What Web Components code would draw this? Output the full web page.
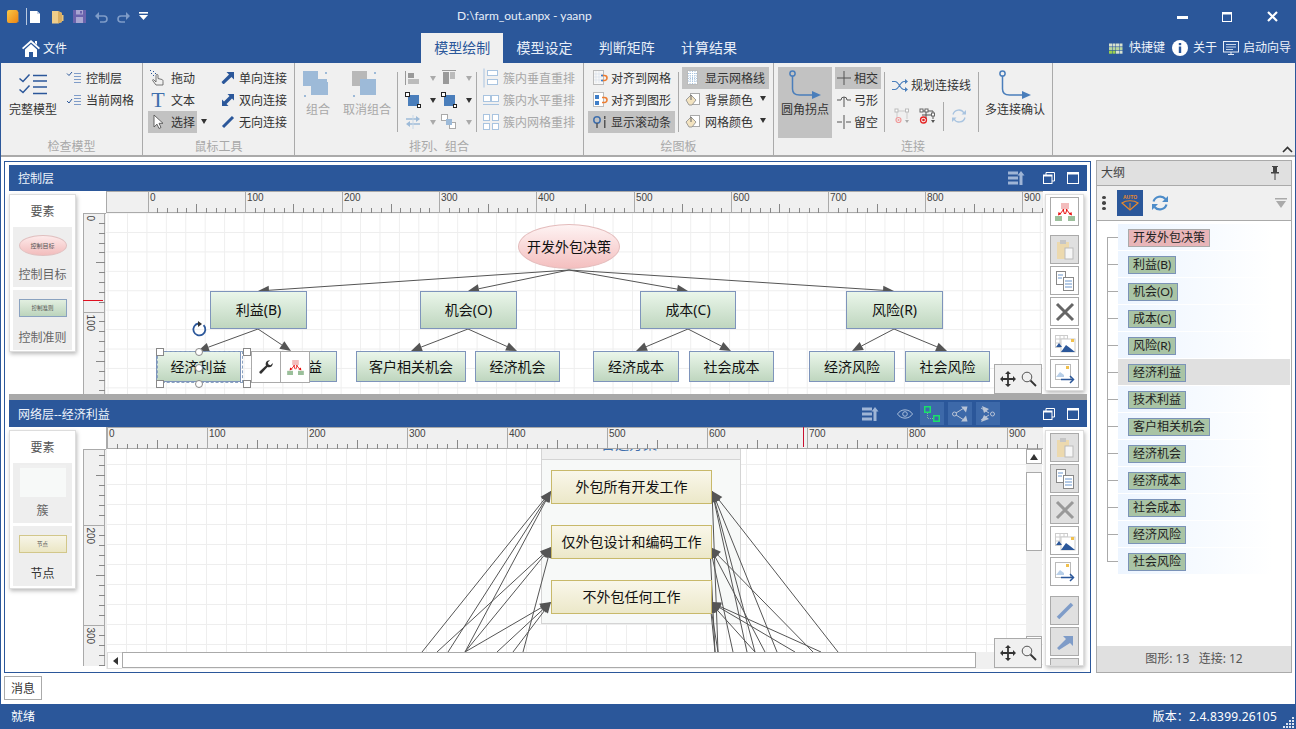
<!DOCTYPE html>
<html lang="zh"><head><meta charset="utf-8"><title>yaanp</title>
<style>
html,body{margin:0;padding:0;background:#fff}
body{width:1296px;height:729px;overflow:hidden;font:12px/18px "Noto Sans","Noto Sans CJK SC",sans-serif;color:#333}
</style></head><body>
<x-app>
 <x-titlebar title-text="D:\farm_out.anpx - yaanp"></x-titlebar>
 <x-tabbar></x-tabbar>
 <x-ribbon>
  <x-group label="检查模型" w="142" pad="8">
    <rb-large icon="chklg" w="50">完整模型</rb-large>
    <rb-col ml="8" w="70"><rb-small icon="chk1">控制层</rb-small><rb-small icon="chk2">当前网格</rb-small></rb-col>
  </x-group>
  <x-group label="鼠标工具" w="152" pad="5">
    <rb-col w="49"><rb-small icon="hand" gap="5" pl="2">拖动</rb-small><rb-small icon="tt" gap="5" pl="2">文本</rb-small><rb-small icon="cursor" gap="5" pl="2" sel>选择</rb-small></rb-col>
    <rb-col w="23"><rb-caret></rb-caret></rb-col>
    <rb-col w="74"><rb-small icon="a1" gap="3">单向连接</rb-small><rb-small icon="a2" gap="3">双向连接</rb-small><rb-small icon="a3" gap="3">无向连接</rb-small></rb-col>
  </x-group>
  <x-group label="排列、组合" w="289" pad="8">
    <rb-large icon="grp" w="30" off>组合</rb-large>
    <rb-large icon="ungrp" w="48" ml="10" off>取消组合</rb-large>
    <rb-sep ml="6" mr="7"></rb-sep>
    <rb-icons></rb-icons>
    <rb-sep ml="0" mr="6"></rb-sep>
    <rb-col w="95"><rb-small icon="cv" off>簇内垂直重排</rb-small><rb-small icon="ch" off>簇内水平重排</rb-small><rb-small icon="cg" off>簇内网格重排</rb-small></rb-col>
  </x-group>
  <x-group label="绘图板" w="190" pad="4">
    <rb-col w="87"><rb-small icon="m1" pl="4" gap="3">对齐到网格</rb-small><rb-small icon="m2" pl="4" gap="3">对齐到图形</rb-small><rb-small icon="sb" pl="4" gap="3" sel>显示滚动条</rb-small></rb-col>
    <rb-sep ml="3" mr="3"></rb-sep>
    <rb-col w="87"><rb-small icon="gridp" pl="3" sel>显示网格线</rb-small><rb-small icon="paint" pl="3" caret>背景颜色</rb-small><rb-small icon="paint" pl="3" caret>网格颜色</rb-small></rb-col>
  </x-group>
  <x-group label="连接" w="279" pad="4">
    <rb-large icon="corner" w="54" h="71" sel>圆角拐点</rb-large>
    <rb-col ml="3" w="46"><rb-small icon="cross" gap="2" pl="1" sel>相交</rb-small><rb-small icon="arc" gap="2" pl="1">弓形</rb-small><rb-small icon="gapx" gap="2" pl="1">留空</rb-small></rb-col>
    <rb-sep ml="3" mr="5"></rb-sep>
    <rb-route></rb-route>
    <rb-sep ml="3" mr="6"></rb-sep>
    <rb-large icon="corner" w="60">多连接确认</rb-large>
  </x-group>
  <rb-collapse></rb-collapse>
 </x-ribbon>
 <x-main>
  <x-doc>
   <x-pane kind="top" label="控制层"></x-pane>
   <x-split></x-split>
   <x-pane kind="bottom" label="网络层--经济利益"></x-pane>
  </x-doc>
  <x-outline></x-outline>
 </x-main>
 <x-msgbar>消息</x-msgbar>
 <x-status></x-status>
</x-app>
<script>
const BL='#4a7ebb',DK='#2b579a';
const L=(d,c,w)=>`<path d="${d}" fill="none" stroke="${c}" stroke-width="${w||1}"/>`;
const F=(d,c)=>`<path d="${d}" fill="${c}"/>`;
const R=(x,y,w,h,f,s)=>`<rect x="${x}" y="${y}" width="${w}" height="${h}" fill="${f||'none'}"${s?` stroke="${s}"`:''}/>`;
const ICONS={
 app:[14,15,`<defs><linearGradient id="ag" x1="0" y1="0" x2="1" y2="1"><stop offset="0" stop-color="#f8c848"/><stop offset="1" stop-color="#ee8412"/></linearGradient></defs><rect x="1" y="1" width="11" height="13" rx="2" fill="url(#ag)"/><path d="M12 3h1v10h-1z" fill="#777"/>`],
 doc:[12,14,F('M1 1h7l3 3v9H1z','#fff')+F('M8 1v3h3z','#c8d4e8')],
 folder:[13,14,F('M1 1h6l4 2v9l-4 1.5H1z','#efcd8a')+F('M7 1l4 2v9l-4 1.5z','#d9ae62')+F('M11 5h1.5v6H11z','#e9c67e')],
 save:[13,13,R(0,0,13,13,'#6a63ad')+R(3,0,7,4.5,'#a9a6d2')+R(3,7,7,6,'#a9a6d2')+R(7,1,2,2.5,'#6a63ad')],
 undo:[13,12,L('M3 5h6a3 3 0 0 1 0 6H5','#7f9cc8',1.6)+F('M0 5l4-4v8z','#7f9cc8')],
 redo:[13,12,L('M10 5H4a3 3 0 0 0 0 6h4','#7f9cc8',1.6)+F('M13 5L9 1v8z','#7f9cc8')],
 qdrop:[10,9,F('M0 0h9v1.6H0z','#fff')+F('M0 3h9L4.5 8z','#fff')],
 home:[18,17,F('M9 0l9 8-1.2 1.2L9 2.4 1.2 9.2 0 8z','#fff')+F('M3 9.5L9 4l6 5.5V17h-4v-5H7v5H3z','#fff')+F('M13 1h2v4l-2-2z','#fff')],
 keys:[14,11,[0,1,2,3].map(i=>[0,1,2].map(j=>R(i*3.5,j*3.6+.5,3,3,j==2&&i<2?'#9bd04e':(j==1?'#b9d6a0':'#d7e1cf'))).join('')).join('')],
 info:[16,16,`<circle cx="8" cy="8" r="8" fill="#fff"/>`+R(6.8,3,2.4,2.2,DK)+R(6.8,6.5,2.4,6.5,DK)],
 monitor:[16,15,R(.5,.5,15,10.5,'none','#e8eef7')+L('M3 3.5h10M3 6h10M3 8.500h7','#c8d6ea')+L('M5 13.500h6M8 11v2','#e8eef7')],
 chklg:[28,22,L('M.5 4.500l3.500 3 6.500-7M.5 15.500l3.500 3 6.500-7',DK,1.5)+L('M14 1.500h14M14 7h14M14 13h14M14 19.500h14',DK,1.5)],
 chk1:[16,16,L('M1 3.500l2 2 3-3.500',DK,1)+L('M8 3.500h7M8 6.500h7M8 9.500h7M8 12.500h7','#7f9cc8',1)],
 chk2:[16,16,L('M1 9l2 2 3-4',DK,1)+L('M8 3.500h7M8 6.500h7M8 9.500h7M8 12.500h7','#7f9cc8',1)],
 hand:[16,16,L('M6 15l-3-4c-1-1 0-2 1-1l2 2V5.500c0-1.500 2-1.500 2 0v3l4 1c1 .5 1 1 1 2v3.500z','#555',.8)+F('M1 3h1v1H1zM3 1h1v1H3zM3 5h1v1H3zM5 3h1v1H5zM0 0h1v1H0z','#2b579a')],
 tt:[16,18,`<text x="8" y="16" text-anchor="middle" font-family="Liberation Serif" font-size="22" fill="#3f6fad">T</text>`],
 cursor:[16,16,F('M4 1v12l3-2.800 2 4.300 2-1-2-4.200h4z','#fff')+L('M4 1v12l3-2.800 2 4.300 2-1-2-4.200h4z','#555',.9)],
 a1:[16,16,F('M3 14L1.500 12 9 4.500 6.500 2H14v7.500L11.500 7 4 14z',DK)],
 a2:[16,16,F('M2 7.500V14h6.500L6.500 12 12 6.500 14 8.500V2H7.500L9.500 4 4 9.500z',DK)],
 a3:[16,16,L('M3 13L13 3',DK,3)],
 grp:[30,28,R(0,0,15,15,'#9dbad8')+R(11,11,14,13,'#9dbad8')+R(8,8,16,16,'#9dbad8')+R(22,1,2,2,'#9dbad8')+R(1,24,2,2,'#9dbad8')],
 ungrp:[30,28,R(0,0,15,15,'#b8b8b8')+R(8,8,16,16,'#9dbad8')+R(22,1,2,2,'#9dbad8')+R(1,24,2,2,'#9dbad8')],
 al1:[16,16,L('M.5 1v14','#999')+R(3,3,6,5,'#999')+R(3,9,11,5,'#bbb')],
 al2:[16,16,L('M1 .5h14','#999')+R(2,2,6,12,'#999')+R(9,2,5,7,'#bbb')],
 z1:[16,16,R(3,3,11,11,'#4a7ebb')+R(.5,.5,4,4,'#fff','#222')+R(12.500,12.500,3,3,'#fff','#222')],
 sw:[16,16,L('M1 5h12M3 10h12','#9dbad8',1.500)+F('M11 2l4 3-4 3zM5 7l-4 3 4 3z','#9dbad8')+L('M8 1v14','#c8d8e8')],
 ord:[16,16,R(.5,.5,6,6,'#fff','#aaa')+R(8.500,8.500,6,6,'#fff','#aaa')+R(5,5,6,6,'#9dbad8')],
 cv:[16,20,R(.5,.5,1,19,'#a9c4e0')+R(4.500,2.500,10,5,'#fff','#a9c4e0')+R(4.500,11.500,10,5,'#fff','#a9c4e0')],
 ch:[16,16,R(.5,3.500,7,6,'#fff','#a9c4e0')+R(8.500,3.500,7,6,'#fff','#a9c4e0')+R(0,12,16,1,'#a9c4e0')],
 cg:[16,16,R(.5,.5,6,6,'#fff','#a9c4e0')+R(9.500,.5,6,6,'#fff','#a9c4e0')+R(.5,9.500,6,6,'#fff','#a9c4e0')+R(9.500,9.500,6,6,'#fff','#a9c4e0')],
 m1:[16,16,R(1.500,.5,10,14,'#f8f8f8','#bbb')+`<path d="M4 1.500v12M7 1.500v12M2.500 4h8M2.500 7h8M2.500 10h8" stroke="#cdd8e6" stroke-dasharray="1 1"/>`+L('M10 5.500h2.500a2.500 2.500 0 0 1 0 5H10','#ee7d31',1.600)+R(9,4.700,2,1.600,'#3f7ec8')+R(9,9.700,2,1.600,'#3f7ec8')],
 m2:[16,16,R(1.500,.5,10,14,'#fff','#bbb')+R(3,3,4,4,'#3f7ec8')+R(3,9,4,4,'#3f7ec8')+L('M10 5.500h2.500a2.500 2.500 0 0 1 0 5H10','#ee7d31',1.600)],
 sb:[16,16,`<circle cx="5" cy="6" r="3.200" fill="none" stroke="#3f6fad" stroke-width="1.500"/>`+L('M5 9v5','#555',1.500)+R(12,2,1.500,3,'#555')+R(12,6,1.500,8,'#555')],
 gridp:[16,16,R(2.500,.5,10,14,'#fff','#bbb')+`<path d="M5 1v13M7.500 1v13M10 1v13M3 3.500h9M3 6h9M3 8.500h9M3 11h9" stroke="#a9c4e0" stroke-dasharray="1 1"/>`],
 paint:[16,16,R(5.500,1.500,9,11,'#fff','#aaa')+F('M1 8l5-5 5 5-4 5H4z','#f3e3c0')+L('M1 8l5-5 5 5-4 5H4z','#888',.8)+L('M6 3v5','#666')],
 corner:[32,30,`<circle cx="3.500" cy="3.500" r="2.600" fill="none" stroke="#4a7ebb" stroke-width="1.500"/>`+L('M3.500 6v13c0 4 3 6 7 6h13',BL,1.500)+F('M23 21l9 4-9 4z',BL)],
 cross:[16,16,L('M1 8h14M8 1v14','#555')],
 arc:[16,16,L('M1 8h4a3 3 0 0 1 6 0h4M8 5v10','#555')],
 gapx:[16,16,L('M1 8h5M10 8h5M8 1v14','#555')],
 shuffle:[16,13,L('M0 2.500h3c4 0 5 8 9 8h2M0 10.500h3c4 0 5-8 9-8h2',BL,1.200)+F('M13 0l3 2.500-3 2.500zM13 8l3 2.500-3 2.500z',BL)],
 rt1:[16,16,L('M2 3h10v8M2 3v7','#ccc')+R(0,1,3,3,'#fff','#bbb')+R(10.500,1,3,3,'#fff','#bbb')+`<circle cx="3.500" cy="12" r="2.500" fill="none" stroke="#f09a9a" stroke-width="1.200"/><circle cx="3.500" cy="12" r="1" fill="#f09a9a"/>`+F('M10 12h4l-2 3z','#aaa')],
 rt2:[16,16,L('M2 3h11v8M6 3v8M2 7h11','#555')+R(0,1,3,3,'#fff','#666')+R(5,1,3,3,'#fff','#666')+R(11.500,5,3,3,'#fff','#666')+`<circle cx="3.500" cy="12" r="3" fill="none" stroke="#e52323" stroke-width="1.300"/><circle cx="3.500" cy="12" r="1.300" fill="#e52323"/>`+F('M11 12h4l-2 3z','#555')],
 refr:[16,16,L('M2 6.500a6 6 0 0 1 11-1.500M14 9.500a6 6 0 0 1-11 1.500','#a9c4e0',1.300)+F('M15 2v4.500h-4.500zM1 14v-4.500h4.500z','#a9c4e0')],
 sort:[16,14,L('M0 2h10M0 7h10M0 12h10','#9fb5d6',3)+F('M13 0l3.500 4.500h-2V14h-3V4.500h-2z','#9fb5d6')],
 restore:[12,12,L('M3 3V.5h8.500v8.500H9','#fff')+R(.5,3,8.500,8.500,'none','#fff')+R(.5,3,8.500,1.500,'#fff')],
 maxi:[12,12,R(.5,.5,11,11,'none','#fff')+R(0,0,12,2.500,'#fff')],
 eye:[16,10,L('M.5 5C4 -.5 12 -.5 15.500 5 12 10.500 4 10.500 .5 5z','#a9bedb')+`<circle cx="8" cy="5" r="2.300" fill="none" stroke="#a9bedb"/>`],
 layer:[16,16,`<g fill="none" stroke="#19e06a" stroke-width="1.500"><rect x=".75" y=".75" width="5.500" height="5.500"/><rect x="9.750" y="9.750" width="5.500" height="5.500"/></g>`+`<path d="M3.500 7v5.500h5.500" fill="none" stroke="#7fb0a0" stroke-dasharray="1 1"/>`],
 share:[16,16,`<circle cx="2.500" cy="8" r="2" fill="none" stroke="#b9c4d6"/>`+L('M4 7l8-5M4 9l8 5','#b9c4d6')+F('M9 .5h6.500l-1.500 6zM9 15.500h6.500l-1.500-6z','#b9c4d6')],
 merge:[16,16,L('M1 2l8 5M1 14l8-5','#b9c4d6')+`<circle cx="12.500" cy="8" r="2" fill="none" stroke="#b9c4d6"/>`+F('M2 0l7 3-5 4zM1 16l8-3-5-4z','#b9c4d6')],
 tree:[20,18,R(6,0,8,6,'#f3bcbc')+R(0,13,7,5,'#9bbf9b')+R(13,13,7,5,'#9bbf9b')+L('M9 6L5 11M11 6l4 5M8 6l1.500 5M12 6l-1.500 5','#e80d0d',1)+F('M3 12.500l.5-3.500 3 2zM17 12.500l-.5-3.500-3 2z','#e80d0d')],
 wrench:[16,16,F('M1.500 12.500L8 6.500C7 4 8.500 1 12 1.200L9.800 3.500 10.500 5.500 12.500 6.200 14.800 4C15 7.500 12 9 9.500 8L3.500 14.500C2.500 15.300.7 13.500 1.500 12.500z','#333')],
 paste:[20,20,R(2,2,12,17,'#ecd9ae')+R(5,0,6,4,'#c6c6c6')+R(10,8,8,11,'#f6f6f6','#bbb')],
 copy:[20,20,R(1.500,.5,9,13,'#fff','#888')+R(8.500,6.500,10,13,'#fff','#888')+L('M3 4h5M3 7h4M10 10h7M10 13h7M10 16h7','#6a96cc')],
 del:[20,20,L('M2 2l16 16M18 2L2 18','#999',3)],
 delon:[20,20,L('M2 2l16 16M18 2L2 18','#666',3)],
 pics:[20,20,R(.5,2.500,12,12,'#fff','#ccc')+L('M1 6h11M1 10h11M5 3v11M9 3v11','#ccc')+R(6,6,14,13,'#fff','#ccc')+F('M6 19l5-7 4 3 5 4z',DK)+F('M1 14l3-4 3 4z',DK)+R(16,6,3,3,'#f1c04c')],
 exp:[20,20,R(.5,.5,15,15,'#fff','#bbb')+F('M1 13l4-5 4 3v2z','#b8cfe8')+R(11,2,3,3,'#f1c04c')+L('M6 15.500h12',DK,1.500)+L('M15 12l3.500 3.500L15 19',DK,1.500)],
 pen:[20,20,L('M3 17L17 3','#7f9cc8',3.500)],
 arr:[20,20,F('M4 18l-2-2L11 7 8 4h10v10l-3-3z','#7f9cc8')],
 move:[16,16,L('M8 1v14M1 8h14','#333',1.800)+F('M8 0l3 3H5zM8 16l-3-3h6zM0 8l3-3v6zM16 8l-3 3V5z','#333')],
 mag:[16,16,`<circle cx="6" cy="6" r="4.800" fill="none" stroke="#555"/>`+L('M9.500 9.500l5.500 5.500','#333',1.800)],
 rot:[16,16,L('M12.600 4.200A6 6 0 1 1 7.500 2.500',DK,1.800)+F('M7 0l4 3-4 3z','#333')],
 pin:[10,14,F('M2 0h6v1H7v5h2v1.500H5.500V14h-1V7.500H1V6h2V1H2z','#444')],
 wiper:[20,18,`<text x="10" y="5" text-anchor="middle" font-family="Liberation Sans" font-weight="bold" font-size="5" fill="#e8892c">AUTO</text>`+L('M2 9c4-3 12-3 16 0l-8 7z','#e8892c',1.200)+L('M10 16V9','#e8892c',1)],
 refb:[18,18,L('M2.500 7.500a7 7 0 0 1 12-2.500M15.500 10.500a7 7 0 0 1-12 2.500','#4d8cc9',2.200)+F('M17 2v6h-6zM1 16v-6h6z','#4d8cc9')],
 tri:[12,10,R(0,0,12,1.500,'#aaa')+F('M1 3h10l-5 7z','#aaa')],
 grip:[12,12,[[9,1],[6,4],[9,4],[3,7],[6,7],[9,7],[0,10],[3,10],[6,10],[9,10]].map(p=>R(p[0],p[1],2,2,'#dbe4f2')).join('')]
};
function def(name,css,html){
 const C=class extends HTMLElement{connectedCallback(){if(this.shadowRoot)return;const s=this.attachShadow({mode:'open'});s.innerHTML=`<style>${typeof css==='function'?css(this):css}</style>`+(typeof html==='function'?html(this):html)}};
 customElements.define(name,C);
}
const ic=(n,w,h)=>`<x-icon name="${n}"${w?` w="${w}"`:''}${h?` h="${h}"`:''}></x-icon>`;
def('x-icon',e=>{const d=ICONS[e.getAttribute('name')];const w=e.getAttribute('w')||d[0],h=e.getAttribute('h')||d[1];return `:host{display:block;flex:none;width:${w}px;height:${h}px}svg{display:block;overflow:visible}`},
 e=>{const d=ICONS[e.getAttribute('name')];const w=e.getAttribute('w')||d[0],h=e.getAttribute('h')||d[1];return `<svg width="${w}" height="${h}" viewBox="0 0 ${d[0]} ${d[1]}">${d[2]}</svg>`});
def('x-app',':host{display:flex;flex-direction:column;width:1296px;height:729px;box-sizing:border-box;border:solid #2b579a;border-width:0 1px;background:#fff}','<slot></slot>');
def('x-titlebar',`:host{display:flex;align-items:center;height:33px;background:#2b579a;color:#fff;flex:none;margin:0 -1px}
 .q{display:flex;align-items:center;width:457px;flex:none;height:100%;padding-left:6px;box-sizing:border-box}
 .q x-icon{margin-right:9px}.s{width:1px;height:17px;background:#b9c9e0;margin:0 2px 0 -3px}
 .t{flex:1;font-family:Lato,"Noto Sans",sans-serif;font-size:12px;line-height:18px;margin-top:-1px;color:#e8eef8}
 .w{display:flex;height:100%;align-items:center;padding:2px 1.500px 0 0;box-sizing:border-box}.w svg{display:block}.b{width:45px;display:flex;justify-content:center}`,
 e=>`<div class="q">${ic('app')}<span class="s"></span>${ic('doc')}<span style="width:1px"></span>${ic('folder')}${ic('save')}${ic('undo')}${ic('redo')}${ic('qdrop')}</div>
 <div class="t">${e.getAttribute('title-text')}</div>
 <div class="w"><div class="b"><svg width="11" height="11"><rect x="0" y="4" width="11" height="3" fill="#fff"/></svg></div><div class="b"><svg width="11" height="11"><rect x=".5" y=".5" width="9" height="9" fill="none" stroke="#fff"/><rect x="0" y="0" width="10" height="2.500" fill="#fff"/></svg></div><div class="b"><svg width="11" height="11" style="margin-top:-2px"><path d="M1 1l9 9M10 1l-9 9" stroke="#fff" stroke-width="2.200"/></svg></div></div>`);
def('x-tabbar',`:host{display:flex;height:30px;flex:none;background:#2b579a;color:#fff;margin:0 -1px;align-items:stretch}
 .home{width:421px;display:flex;align-items:center;padding-left:22px;box-sizing:border-box;gap:3px}
 .home span{padding-top:1px}
 .tab{width:82.300px;text-align:center;font-size:14px;line-height:29px;color:#e8eef8}
 .on{background:#f0f0f0;color:#2b579a}
 .r{margin-left:auto;display:flex;align-items:center;padding-right:5px;font-size:12px;color:#eef3fa}.r x-icon{margin-right:4px}.r span{margin-right:7px}`,
 `<div class="home">${ic('home')}<span style="color:#f4f7fb">文件</span></div><div class="tab on">模型绘制</div><div class="tab">模型设定</div><div class="tab">判断矩阵</div><div class="tab">计算结果</div>
 <div class="r">${ic('keys')}<span style="margin-left:2px">快捷键</span>${ic('info')}<span style="margin:0 6px 0 1px">关于</span>${ic('monitor')}<span style="margin:0">启动向导</span></div>`);
def('x-ribbon',`:host{display:flex;height:94px;flex:none;box-sizing:border-box;background:#f0f0f0;border-bottom:2px solid #aaa;position:relative}`,'<slot></slot>');
def('x-group',e=>`:host{display:flex;flex-direction:column;width:${e.getAttribute('w')}px;flex:none;box-sizing:border-box;border-right:1px solid #aaa}
 .c{height:71px;flex:none;padding:4px 0 0 ${(+e.getAttribute('pad')||0)-(e.getAttribute('label')==='检查模型'?1:0)}px;display:flex;align-items:flex-start;box-sizing:content-box}
 .l{text-align:center;color:#a8a8a8;line-height:18px;flex:none}`,
 e=>`<div class="c"><slot></slot></div><div class="l">${e.getAttribute('label')}</div>`);
def('rb-large',e=>`:host{display:flex;flex-direction:column;align-items:center;flex:none;width:${e.getAttribute('w')}px;height:${e.getAttribute('h')||60}px;margin-left:${e.getAttribute('ml')||0}px;box-sizing:border-box;color:${e.hasAttribute('off')?'#a8a8a8':'#333'};background:${e.hasAttribute('sel')?'#c2c2c2':'none'}}
 .i{height:30px;margin-top:3px;display:flex;align-items:center;justify-content:center;flex:none}.t{line-height:18px;white-space:nowrap;margin-top:1px}`,
 e=>`<div class="i">${ic(e.getAttribute('icon'))}</div><div class="t"><slot></slot></div>`);
def('rb-col',e=>`:host{display:flex;flex-direction:column;flex:none;width:${e.getAttribute('w')}px;margin-left:${e.getAttribute('ml')||0}px}`,'<slot></slot>');
def('rb-small',e=>`:host{display:flex;align-items:center;height:22px;flex:none;white-space:nowrap;padding-left:${e.getAttribute('pl')||0}px;gap:${e.getAttribute('gap')||4}px;color:${e.hasAttribute('off')?'#a8a8a8':'#333'};background:${e.hasAttribute('sel')?'#c2c2c2':'none'}}
 span{padding-top:2px}
 .k{margin-left:3px;border:solid transparent;border-width:5px 3.500px 0;border-top-color:#333;margin-top:-3px}`,
 e=>`${ic(e.getAttribute('icon'))}<span><slot></slot></span>${e.hasAttribute('caret')?'<i class="k"></i>':''}`);
def('rb-caret',`:host{display:flex;height:22px;margin-top:44px;align-items:center;padding-left:4px}i{border:solid transparent;border-width:5px 3.500px 0;border-top-color:#333;margin-top:-2px}`,'<i></i>');
def('rb-sep',e=>`:host{display:block;flex:none;width:1px;height:60px;margin:5px ${e.getAttribute('mr')||0}px 0 ${e.getAttribute('ml')||0}px;background:#aaa}`,'');
def('rb-icons',`:host{display:grid;grid-template-columns:36px 35px;grid-auto-rows:22px;flex:none;width:71px}
 div{display:flex;align-items:center;gap:9px}i{border:solid transparent;border-width:5px 3.500px 0;border-top-color:#aaa}i.d{border-top-color:#333}`,
 [['al1',0],['al2',0],['z1',1],['z1',1],['sw',0],['ord',0]].map(([n,d])=>`<div>${ic(n)}<i class="${d?'d':''}"></i></div>`).join(''));
def('rb-route',`:host{display:flex;flex-direction:column;width:85px;flex:none}
 .a{display:flex;align-items:center;height:36px;gap:3px;padding-left:2px;white-space:nowrap}.a span{padding-top:1px}.b{display:flex;align-items:center;height:26px;padding-left:5px}
 .s{width:1px;height:29px;background:#aaa;margin:0 7px;flex:none}`,
 `<div class="a">${ic('shuffle')}<span>规划连接线</span></div><div class="b">${ic('rt1')}<span style="width:9px"></span>${ic('rt2')}<span class="s"></span>${ic('refr')}</div>`);
def('rb-collapse',`:host{display:block;position:absolute;right:2px;bottom:2px;line-height:0}`,`<svg width="11" height="7"><path d="M1 6l4.500-4.500L10 6" fill="none" stroke="#333" stroke-width="1.600"/></svg>`);
def('x-main',`:host{display:flex;flex:none;height:516px;padding:3px 2px 0 3px;box-sizing:border-box;gap:5px}`,'<slot></slot>');
def('x-doc',`:host{display:flex;flex-direction:column;width:1087px;height:512px;margin-top:1px;box-sizing:border-box;border:1px solid #2b579a;padding:3px 3px 0 4px;flex:none}`,'<slot></slot>');
def('x-split',`:host{display:block;height:6px;background:#a9a9a9;flex:none}`,'');
const hb=(n)=>`<div class="hl">${ic(n)}</div>`;
def('x-pane',e=>{const top=e.getAttribute('kind')==='top';return `:host{display:flex;flex-direction:column;flex:none;height:${top?229:269}px}
 .h{height:${top?26:27}px;flex:none;background:#2b579a;display:flex;align-items:center;padding-left:9px;font-size:12px;color:#eef3fa}
 .h .tt{flex:1;padding-top:2px}.h x-icon{margin-right:12px}
 .hl{width:24px;height:23px;background:#3d69a9;display:flex;align-items:center;justify-content:center;margin-right:4px}.hl x-icon{margin:0}
 .b{flex:1;display:grid;grid-template-columns:74px 23px 937px 44px;grid-template-rows:22px 1fr;background:#fff;min-height:0}
 .p{grid-row:1/3;padding-top:3px}.cr{grid-column:2;grid-row:1}.tb{grid-column:4;grid-row:1/3;padding:3px 0 0 2px}`},
 e=>{const top=e.getAttribute('kind')==='top';return `<div class="h"><span class="tt">${e.getAttribute('label')}</span>
 ${top?`<x-icon name="sort" style="margin-right:19px"></x-icon>`:`<x-icon name="sort" style="margin-right:19px"></x-icon><x-icon name="eye" style="margin-right:7px"></x-icon>${hb('layer')}${hb('share')}${hb('merge')}<span style="width:39px"></span>`}
 ${ic('restore')}<x-icon name="maxi" style="margin-right:8px"></x-icon></div>
 <div class="b"><div class="p"><x-palette kind="${e.getAttribute('kind')}"></x-palette></div><div class="cr"></div>
 <x-ruler dir="h" o="${top?41.600:.7}" sc="${top?.972:1}" len="937" style="grid-column:3;grid-row:1"></x-ruler>
 <x-ruler dir="v" o="${top?0:-124}" sc="${top?.985:1}" len="${top?181:217}" style="grid-column:2;grid-row:2"></x-ruler>
 <x-canvas kind="${e.getAttribute('kind')}" style="grid-column:3;grid-row:2"></x-canvas>
 <div class="tb"><x-toolbar kind="${e.getAttribute('kind')}"></x-toolbar></div></div>`});
def('x-ruler',e=>e.getAttribute('dir')==='h'?`:host{display:block;height:22px;line-height:0;overflow:hidden}`:`:host{display:block;width:23px;line-height:0;overflow:hidden;height:${e.getAttribute('len')}px}`,
 e=>{const o=+e.getAttribute('o'),sc=+e.getAttribute('sc'),len=+e.getAttribute('len');let s='';
 const tc='#888';
 if(e.getAttribute('dir')==='h'){
  s+=`<rect width="${len}" height="22" fill="#f0f0f0"/><path d="M0 .5H${len}M0 21.500H${len}M.5 0V22" stroke="#aaa"/>`;
  for(let u=0;u<=1000;u+=10){const x=Math.round(o+u*sc)+.5;if(x>len)break;
   if(u%100===0){s+=`<path d="M${x} 0V22" stroke="#aaa"/><text x="${x+1.500}" y="10" font-family="Liberation Sans" font-size="10" fill="#444">${u}</text>`}
   else s+=`<path d="M${x} ${u%50===0?13:17}V22" stroke="${tc}"/>`}
  if(o<1)s+=`<path d="M697.500 0V20" stroke="#c81030"/>`;
  return `<svg width="${len}" height="22">${s}</svg>`;
 }
 s+=`<rect width="23" height="${len}" fill="#f0f0f0"/><path d="M.5 0V${len}M21.500 0V${len}M0 .5H23" stroke="#aaa"/>`;
 for(let u=0;u<=600;u+=10){const y=Math.round(o+u*sc)+.5;if(y<0)continue;if(y>len)break;
  if(u%100===0){s+=`<path d="M0 ${y}H22" stroke="#aaa"/><text transform="translate(4 ${y+2}) rotate(90)" font-family="Liberation Sans" font-size="10" fill="#444">${u}</text>`}
  else s+=`<path d="M${u%50===0?13:16} ${y}H22" stroke="${tc}"/>`}
 if(e.getAttribute('o')==='0')s+=`<path d="M0 87.500H20" stroke="#e01020"/>`;
 return `<svg width="23" height="${len}">${s}</svg>`});
def('x-palette',e=>`:host{display:block;width:67px;height:${e.getAttribute('kind')==='top'?158:159}px;box-sizing:border-box;background:#fff;border:1px solid #ddd;box-shadow:1px 2px 4px #bbb;padding:0 3px}
 .t{text-align:center;font-size:12px;line-height:18px;padding:8px 0 6px;color:#555}
 .i{height:60px;background:#eee;margin-bottom:3px;display:flex;flex-direction:column;align-items:center}
 .pv{height:36px;display:flex;align-items:center;justify-content:center}.l{line-height:18px;color:#666;margin-top:3px}
 .m{width:48px;height:21px;font-size:6px;line-height:21px;text-align:center;box-sizing:border-box;color:#555;white-space:nowrap;overflow:hidden}
 .e{border-radius:50%;background:linear-gradient(#fdeaea,#f2bcbc);border:1px solid #e0c0c0}
 .n{height:18px;line-height:17px;background:linear-gradient(#e2efe0,#bcd4bc);border:1px solid #8aa2c0;font-size:5.500px}
 .g{width:46px;height:29px;background:#f7f9f8;border-top:3px solid #f0f0f0}
 .y{height:18px;line-height:17px;background:linear-gradient(#f7f5e8,#ebe6c4);border:1px solid #d2c78a;font-size:5.500px}`,
 e=>e.getAttribute('kind')==='top'?`<div class="t">要素</div><div class="i"><div class="pv"><div class="m e">控制目标</div></div><div class="l">控制目标</div></div><div class="i"><div class="pv"><div class="m n">控制准则</div></div><div class="l">控制准则</div></div>`
 :`<div class="t">要素</div><div class="i"><div class="pv"><div class="g"></div></div><div class="l">簇</div></div><div class="i"><div class="pv"><div class="m y">节点</div></div><div class="l" style="color:#333">节点</div></div>`);
def('x-node',e=>{const k=e.getAttribute('k');const bg={e:'linear-gradient(#fef3f3,#f4bfbf)',g:'linear-gradient(#eaf6ea,#bfd6bf)',y:'linear-gradient(#f9f7ea,#ece8c9)'}[k];const bd={e:'#e4bcbc',g:'#7e94bb',y:'#c8b96a'}[k];
 return `:host{display:flex;align-items:center;justify-content:center;position:absolute;left:${e.getAttribute('x')}px;top:${e.getAttribute('y')}px;width:${e.getAttribute('w')}px;height:${e.getAttribute('h')}px;box-sizing:border-box;background:${bg};border:1px solid ${bd};${k==='e'?'border-radius:50%;':''}font-size:14px;line-height:20px;color:#111;white-space:nowrap}`},'<slot></slot>');
function arrow(x1,y1,x2,y2){const a=Math.atan2(y2-y1,x2-x1),l=11,w=4.500;const bx=x2-l*Math.cos(a),by=y2-l*Math.sin(a),nx=-Math.sin(a)*w,ny=Math.cos(a)*w;
 return `<path d="M${x1} ${y1}L${bx} ${by}" stroke="#555" fill="none"/><path d="M${x2} ${y2}L${bx+nx} ${by+ny}L${bx-nx} ${by-ny}z" fill="#555"/>`}
const n=(x,y,w,h,k,t)=>`<x-node x="${x}" y="${y}" w="${w}" h="${h}" k="${k}">${t}</x-node>`;
def('x-canvas',e=>{const top=e.getAttribute('kind')==='top';const s=top?19.43:20;
 return `:host{display:block;position:relative;overflow:hidden;background-color:#fff;background-image:linear-gradient(#eee 1px,transparent 1px),linear-gradient(90deg,#eee 1px,transparent 1px);background-size:${s}px ${s}px;background-position:${top?'21px 19px':'20px 15px'}}
 svg{position:absolute;left:0;top:0}
 .vs svg,.hs svg{position:static}
 .cl{position:absolute;left:435px;top:-19px;width:200px;height:194px;box-sizing:border-box;border:1px solid #d4d4d4;background:#f7f9f8}
 .clh{height:29px;box-sizing:border-box;background:#f0f0f0;border-bottom:1px solid #d4d4d4;color:#3f6fad;line-height:20px;overflow:hidden;font-size:14px;padding:3px 0 0 59px}
 .sel{position:absolute;left:51px;top:138px;width:86px;height:32px;box-sizing:border-box;border:1px dashed #8aa2c0}
 .hd{position:absolute;width:6px;height:6px;background:#fff;border:1px solid #888}
 .c{border-radius:50%}
 .rot{position:absolute;left:85px;top:108px}
 .mini{position:absolute;left:145px;top:138px;width:59px;height:32px;box-sizing:border-box;display:flex;background:#fff;border:1px solid #aaa}
 .mini div{flex:1;display:flex;align-items:center;justify-content:center}.mini div+div{border-left:1px solid #aaa}
 .pad{position:absolute;right:1px;bottom:0;width:48px;height:30px;box-sizing:border-box;background:#f0f0f0;border:1px solid #aaa;display:flex;align-items:center;justify-content:center;gap:5px}
 .vs{position:absolute;left:920px;top:0;width:16px;height:203px;background:#f0f0f0}
 .vs .u{height:15px;box-sizing:border-box;background:#fff;border:1px solid #aaa;display:flex;align-items:center;justify-content:center}
 .vs .th{margin-top:8px;height:79px;background:#fff;box-sizing:border-box;border:1px solid #aaa}
 .vs .d{margin-top:85px;height:20px;box-sizing:border-box;background:#fff;border:1px solid #aaa}
 .hs{position:absolute;left:1px;top:203px;width:935px;height:17px;background:#f0f0f0;display:flex}
 .hs .u{width:15px;box-sizing:border-box;background:#fff;border:1px solid #ddd;display:flex;align-items:center;justify-content:center;border-right:0}
 .hs .th{width:854px;height:16px;background:#fff;box-sizing:border-box;border:1px solid #aaa}`},
 e=>{const top=e.getAttribute('kind')==='top';
 if(top){const X=106,Y=213;let s='';const A=(a,b,c,d)=>{s+=arrow(a-X,b-Y,c-X,d-Y)};
  [258,468,688,894].forEach(x=>A(569,270,x,291));
  [[258,198,291],[468,411,517],[688,636,731],[894,852,947]].forEach(([f,a,b])=>{A(f,329,a,351);A(f,329,b,351)});
  const nd=(x,y,w,h,k,t)=>n(x-X,y-Y,w,h,k,t);
  return `<svg width="937" height="181">${s}</svg>`+nd(518,224,102,45,'e','开发外包决策')+
  nd(210,291,97,38,'g','利益(B)')+nd(420,291,97,38,'g','机会(O)')+nd(640,291,96,38,'g','成本(C)')+nd(846,291,97,38,'g','风险(R)')+
  nd(156,351,85,31,'g','经济利益')+nd(251,351,86,31,'g','技术利益')+nd(356,351,110,31,'g','客户相关机会')+nd(475,351,85,31,'g','经济机会')+nd(593,351,86,31,'g','经济成本')+nd(689,351,85,31,'g','社会成本')+nd(809,351,86,31,'g','经济风险')+nd(905,351,85,31,'g','社会风险')+
  `<div class="sel"></div>`+[[50,135],[137,135],[50,167],[137,167]].map(p=>`<div class="hd" style="left:${p[0]}px;top:${p[1]}px"></div>`).join('')+[[89,135],[89,167],[89,151]].map(p=>`<div class="hd c" style="left:${p[0]}px;top:${p[1]}px"></div>`).join('')+
  `<div class="rot">${ic('rot')}</div><div class="mini"><div>${ic('wrench')}</div><div>${ic('tree',17,15)}</div></div><div class="pad">${ic('move')}${ic('mag')}</div>`;}
 const X=106,Y=449;let s='';const A=(a,c,d)=>{s+=arrow(a-X,652-Y,c-X,d-Y)};
 [422,448,465].forEach(a=>A(a,551,491));[437,465,523].forEach(a=>A(a,551,547));[465,497,513].forEach(a=>A(a,551,602));
 [718,747,755,777,838].forEach(a=>A(a,712,491));[715,733,765,813].forEach(a=>A(a,710,547));[715,718,755,795,821].forEach(a=>A(a,710,602));
 const nd=(x,y,t)=>n(x-X,y-Y,161,34,'y',t);
 return `<div class="cl"><div class="clh">备选方案</div></div><svg width="937" height="203">${s}</svg>`+nd(551,470,'外包所有开发工作')+nd(551,525,'仅外包设计和编码工作')+nd(551,580,'不外包任何工作')+
 `<div class="vs"><div class="u"><svg width="8" height="6"><path d="M4 0l4 6H0z" fill="#333"/></svg></div><div class="th"></div><div class="d"></div></div>
 <div class="hs"><div class="u"><svg width="5" height="8"><path d="M0 4l5-4v8z" fill="#333"/></svg></div><div class="th"></div></div><div class="pad" style="bottom:1px">${ic('move')}${ic('mag')}</div>`});
def('x-tool',e=>{const off=e.hasAttribute('off');return `:host{display:flex;align-items:center;justify-content:center;width:29px;height:29px;box-sizing:border-box;border:1px solid #aaa;background:${off?'#e0e0e0':'#fff'};flex:none;margin-top:${e.getAttribute('mt')||2}px}`},e=>ic(e.getAttribute('icon')));
def('x-toolbar',e=>{const top=e.getAttribute('kind')==='top';return `:host{display:block;width:39px;height:${top?197:236}px;box-sizing:border-box;background:#fff;border:1px solid #ddd;box-shadow:1px 2px 4px #bbb;padding:0 4px;overflow:hidden}`},
 e=>e.getAttribute('kind')==='top'?`<x-tool icon="tree" mt="2"></x-tool><x-tool icon="paste" off mt="9"></x-tool><x-tool icon="copy"></x-tool><x-tool icon="delon"></x-tool><x-tool icon="pics"></x-tool><x-tool icon="exp"></x-tool>`
 :`<x-tool icon="paste" off mt="2"></x-tool><x-tool icon="copy" off></x-tool><x-tool icon="del" off></x-tool><x-tool icon="pics"></x-tool><x-tool icon="exp"></x-tool><x-tool icon="pen" off mt="10"></x-tool><x-tool icon="arr" off></x-tool><x-tool icon="arr" off></x-tool>`);
def('x-tree-row',e=>{const i=e.getAttribute('pos');const v=i==='first'?'0 13px/1px 14px':i==='last'?'0 0/1px 14px':'0 0/1px 100%';const root=e.hasAttribute('root');
 return `:host{display:flex;height:27px}
 .s{width:11px;flex:none;background:linear-gradient(#aaa,#aaa) ${v} no-repeat,linear-gradient(#aaa,#aaa) 0 13px/100% 1px no-repeat}
 .r{width:172px;height:26px;display:flex;align-items:center;padding-left:10px;box-sizing:border-box;background:${e.hasAttribute('sel')?'#e0e0e0':'linear-gradient(90deg,#edf5ff,#fff 90%)'}}
 .t{height:18px;line-height:15px;padding:0 4px;box-sizing:border-box;border:1px solid ${root?'#aaa':'#7b93b8'};background:${root?'#e8b5b8':'#a9c4a5'};color:#222;font-family:Lato,"Noto Sans CJK SC",sans-serif;font-size:12px;white-space:nowrap;margin-top:1px}`},
 '<div class="s"></div><div class="r"><div class="t"><slot></slot></div></div>');
def('x-outline',`:host{display:flex;flex-direction:column;width:196px;height:513px;box-sizing:border-box;border:1px solid #aaa;flex:none;background:#fff}
 .h{height:24px;background:#e0e0e0;border-bottom:1px solid #aaa;display:flex;align-items:center;justify-content:space-between;padding:0 11px 0 4px;flex:none;color:#444}
 .b{height:34px;background:#f0f0f0;border-bottom:1px solid #aaa;display:flex;align-items:center;flex:none;padding-left:4px}
 .au{width:26px;height:26px;background:#2b579a;display:flex;align-items:center;justify-content:center;margin:0 8px 0 11px}
 .d{display:flex;flex-direction:column;gap:2px;margin-left:1px}.d i{width:4px;height:3.500px;border-radius:50%;background:#444}
 .tree{flex:1;padding:3px 0 0 10px}
 .f{height:26px;background:#e0e0e0;text-align:center;line-height:26px;color:#555;flex:none}`,
 ()=>{const it=['开发外包决策','利益(B)','机会(O)','成本(C)','风险(R)','经济利益','技术利益','客户相关机会','经济机会','经济成本','社会成本','经济风险','社会风险'];
 return `<div class="h"><span>大纲</span>${ic('pin')}</div><div class="b"><div class="d"><i></i><i></i><i></i></div><div class="au">${ic('wiper')}</div>${ic('refb')}<span style="margin-left:auto;margin-right:4px">${ic('tri')}</span></div>
 <div class="tree">${it.map((t,i)=>`<x-tree-row pos="${i==0?'first':i==12?'last':'m'}"${i==0?' root':''}${i==5?' sel':''}>${t}</x-tree-row>`).join('')}</div><div class="f">图形: 13 &nbsp; 连接: 12</div>`});
def('x-msgbar',`:host{display:flex;flex:none;height:31px;padding:3px 0 4px 3px;box-sizing:border-box}.t{width:38px;height:24px;box-sizing:border-box;border:1px solid #aaa;text-align:center;line-height:23px;color:#333}`,'<div class="t"><slot></slot></div>');
def('x-status',`:host{display:flex;flex:none;height:25px;background:#2b579a;color:#fff;align-items:center;justify-content:space-between;margin:0 -1px;padding:0 1px 0 11px;font-size:12px}
 .r{display:flex;align-items:center;gap:6px;align-self:stretch}.r x-icon{align-self:flex-end;margin-bottom:1px}.r span{letter-spacing:.2px}`,
 `<span>就绪</span><div class="r"><span>版本：2.4.8399.26105</span>${ic('grip')}</div>`);
</script>
</body></html>
